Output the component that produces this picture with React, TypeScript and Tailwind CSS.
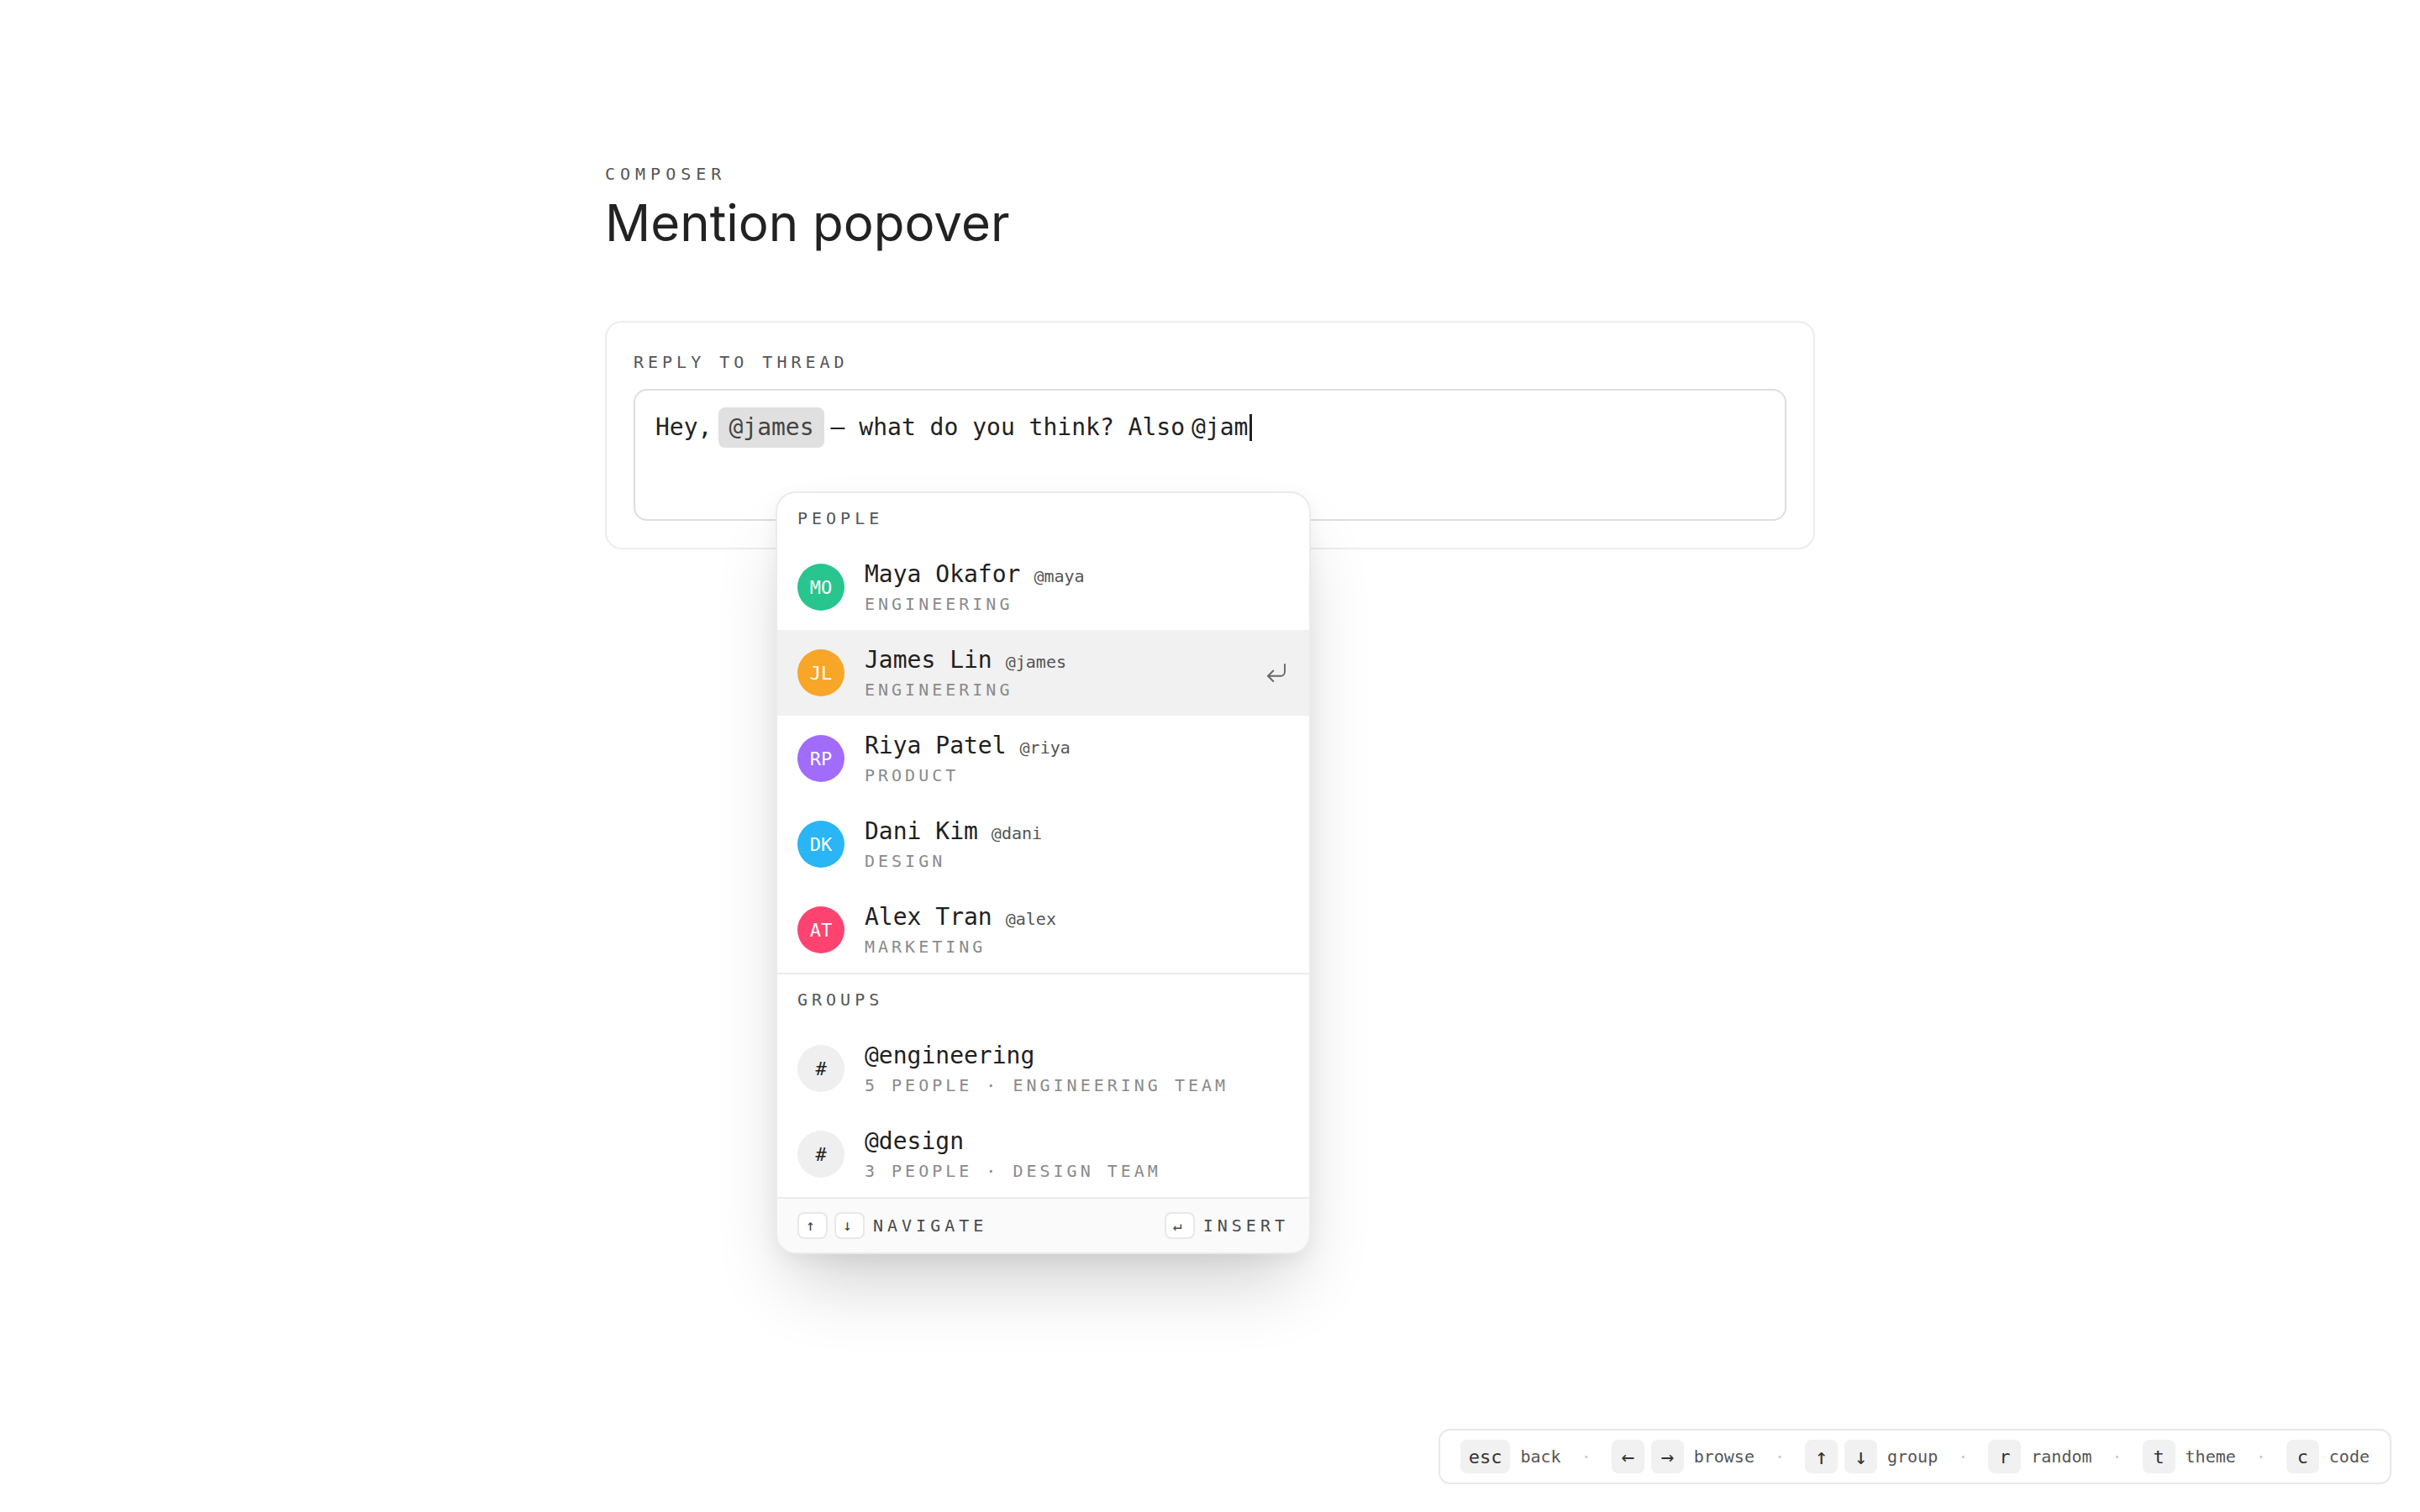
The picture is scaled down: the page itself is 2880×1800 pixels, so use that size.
import { CornerDownLeft } from "lucide-react";

const mono = "font-['DejaVu_Sans_Mono','Liberation_Mono',monospace]";

const people = [
  { initials: "MO", name: "Maya Okafor", handle: "@maya", dept: "Engineering", color: "bg-[#28c58f]" },
  { initials: "JL", name: "James Lin", handle: "@james", dept: "Engineering", color: "bg-[#f8a628]", active: true },
  { initials: "RP", name: "Riya Patel", handle: "@riya", dept: "Product", color: "bg-[#a16cfa]" },
  { initials: "DK", name: "Dani Kim", handle: "@dani", dept: "Design", color: "bg-[#29b5f6]" },
  { initials: "AT", name: "Alex Tran", handle: "@alex", dept: "Marketing", color: "bg-[#ff4371]" },
];

const groups = [
  { name: "@engineering", sub: "5 people · Engineering team" },
  { name: "@design", sub: "3 people · Design team" },
];

const hints = [
  { keys: ["esc"], label: "back" },
  { keys: ["←", "→"], label: "browse" },
  { keys: ["↑", "↓"], label: "group" },
  { keys: ["r"], label: "random" },
  { keys: ["t"], label: "theme" },
  { keys: ["c"], label: "code" },
];

function SectionLabel({ children }: { children: string }) {
  return (
    <div className="px-[24px] pt-[15px] pb-[16px] text-[20px] leading-[30px] tracking-[5px] text-[#555] uppercase">
      {children}
    </div>
  );
}

function Kbd({ children }: { children: string }) {
  return (
    <span className="flex h-[32px] w-[36px] items-center justify-center rounded-[8px] border-2 border-[#e8e8e8] bg-white text-[18px] leading-none text-[#444]">
      {children}
    </span>
  );
}

function MentionPopover() {
  return (
    <div
      className={`absolute left-[201px] top-[201px] z-10 w-[637px] overflow-hidden rounded-[24px] border-2 border-[#ebebeb] bg-white shadow-[0_48px_90px_-20px_rgba(0,0,0,0.2),0_8px_24px_rgba(0,0,0,0.05)] ${mono}`}
    >
      <SectionLabel>People</SectionLabel>
      {people.map((p) => (
        <div
          key={p.handle}
          className={`flex items-center gap-[24px] px-[24px] py-[16px] ${p.active ? "bg-[#f1f1f1]" : ""}`}
        >
          <div
            className={`flex h-[56px] w-[56px] shrink-0 items-center justify-center rounded-full text-[22px] text-white ${p.color}`}
          >
            {p.initials}
          </div>
          <div className="flex flex-col">
            <div className="flex items-baseline gap-[16px]">
              <span className="text-[28px] leading-[40px] text-[#1f1f1f]">{p.name}</span>
              <span className="text-[20px] text-[#555]">{p.handle}</span>
            </div>
            <div className="text-[20px] leading-[30px] tracking-[4px] text-[#8a8a8a] uppercase">{p.dept}</div>
          </div>
          {p.active && <CornerDownLeft size={30} strokeWidth={1.5} className="ml-auto text-[#666]" />}
        </div>
      ))}
      <div className="border-t-2 border-[#ececec]">
        <SectionLabel>Groups</SectionLabel>
        {groups.map((g) => (
          <div key={g.name} className="flex items-center gap-[24px] px-[24px] py-[16px]">
            <div className="flex h-[56px] w-[56px] shrink-0 items-center justify-center rounded-full bg-[#efefef] text-[22px] text-[#222]">
              #
            </div>
            <div className="flex flex-col">
              <span className="text-[28px] leading-[40px] text-[#1f1f1f]">{g.name}</span>
              <span className="text-[20px] leading-[30px] tracking-[4px] text-[#8a8a8a] uppercase">{g.sub}</span>
            </div>
          </div>
        ))}
      </div>
      <div className="flex items-center border-t-2 border-[#ececec] bg-[#fafafa] px-[24px] py-[16px] text-[20px] tracking-[5px] text-[#4a4a4a]">
        <div className="flex items-center gap-[8px]">
          <Kbd>↑</Kbd>
          <Kbd>↓</Kbd>
          <span className="ml-[2px]">NAVIGATE</span>
        </div>
        <div className="ml-auto flex items-center gap-[10px]">
          <Kbd>↵</Kbd>
          <span>INSERT</span>
        </div>
      </div>
    </div>
  );
}

export default function App() {
  return (
    <div className="relative min-h-screen bg-white font-['Inter',sans-serif]">
      <div className="mx-auto w-[1440px] pt-[192px]">
        <div className={`text-[20px] leading-[30px] tracking-[6px] text-[#555] ${mono}`}>COMPOSER</div>
        <h1 className="mt-[7px] text-[60px] leading-[72px] font-normal text-[#222]">Mention popover</h1>

        <div className="relative mt-[81px] rounded-[20px] border-2 border-[#ededed] bg-white p-[32px]">
          <div className={`text-[20px] leading-[30px] tracking-[5px] text-[#555] ${mono}`}>REPLY TO THREAD</div>
          <div className={`mt-[17px] h-[157px] rounded-[16px] border-2 border-[#dedede] bg-white px-[24px] pt-[20px] ${mono}`}>
            <div className="flex items-center gap-[8px] text-[28px] leading-[42px] text-[#222]">
              <span>Hey,</span>
              <span className="rounded-[8px] bg-[#e0e0e0] px-[12px] py-[3px] text-[#444]">@james</span>
              <span className="whitespace-pre">— what do you think? Also</span>
              <span className="flex items-center">
                @jam
                <span className="ml-[2px] inline-block h-[32px] w-[3px] bg-[#222]" />
              </span>
            </div>
          </div>
          <MentionPopover />
        </div>
      </div>

      <div
        className={`fixed right-[34px] bottom-[33px] flex h-[66px] items-center gap-[24px] rounded-[14px] border-2 border-[#e8e8e8] bg-white px-[24px] ${mono}`}
      >
        {hints.map((h, i) => (
          <div key={h.label} className="flex items-center gap-[24px]">
            {i > 0 && <span className="text-[20px] text-[#c8c8c8]">·</span>}
            <div className="flex items-center gap-[12px]">
              <div className="flex items-center gap-[8px]">
                {h.keys.map((k) => (
                  <span
                    key={k}
                    className={`flex h-[40px] min-w-[39px] items-center justify-center rounded-[8px] bg-[#f1f1f1] px-[10px] text-[#333] ${k.length === 1 && k > "~" ? "text-[26px]" : "text-[22px]"}`}
                  >
                    {k}
                  </span>
                ))}
              </div>
              <span className="text-[20px] text-[#555]">{h.label}</span>
            </div>
          </div>
        ))}
      </div>
    </div>
  );
}
